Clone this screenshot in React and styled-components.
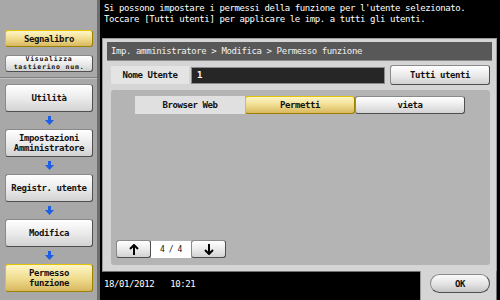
import React from "react";
import styled, { createGlobalStyle, css } from "styled-components";

const GlobalStyle = createGlobalStyle`
  html, body { margin: 0; padding: 0; background: #000; }
  body { font-family: "DejaVu Sans Mono", "Liberation Mono", monospace; }
`;

const Screen = styled.div`
  width: 500px;
  height: 300px;
  display: flex;
  background: #000;
  overflow: hidden;
  font-size: 9px;
  letter-spacing: -0.4px;
  color: #111;
`;

const Sidebar = styled.div`
  width: 97px;
  border-right: 3px solid #6e6e6e;
  background: #a8a8a8;
  display: flex;
  flex-direction: column;
`;

const SideTop = styled.div`
  height: 78px;
  box-sizing: border-box;
  padding: 30px 0 0 5px;
  display: flex;
  flex-direction: column;
  gap: 8px;
  border-bottom: 1px solid #808080;
  box-shadow: 0 1px 0 #c4c4c4;
`;

const raised = css`
  box-sizing: border-box;
  border: 1px solid #8a8a8a;
  border-right-color: #4e4e4e;
  border-bottom-color: #4e4e4e;
  border-radius: 3px;
  background: linear-gradient(#ffffff, #e9e9e9 55%, #d2d2d2);
  font-weight: bold;
  display: flex;
  align-items: center;
  justify-content: center;
  text-align: center;
`;

const selected = css`
  border: 1px solid #e6c300;
  border-right-color: #9c8100;
  border-bottom-color: #9c8100;
  background: linear-gradient(#fff6c8, #f0dd90 50%, #d8b860);
`;

const SideButton = styled.div`
  ${raised}
  width: 88px;
  height: ${(p) => p.h || 28}px;
  line-height: ${(p) => (p.small ? 7.5 : 10)}px;
  font-size: ${(p) => (p.small ? 6.5 : 9)}px;
  letter-spacing: ${(p) => (p.small ? "0.8px" : "-0.4px")};
  ${(p) => p.active && selected}
`;

const SideNav = styled.div`
  padding: 6px 0 0 5px;
  display: flex;
  flex-direction: column;
`;

const NavArrow = styled.div`
  width: 88px;
  height: 17px;
  display: flex;
  align-items: center;
  justify-content: center;
`;

const Main = styled.div`
  flex: 1;
  display: flex;
  flex-direction: column;
`;

const Message = styled.div`
  height: 38px;
  box-sizing: border-box;
  padding: 3px 0 0 4px;
  color: #fff;
  line-height: 11px;
  white-space: pre;
`;

const Panel = styled.div`
  height: 234px;
  margin: 0 3px 0 2px;
  box-sizing: border-box;
  background: #d5d5d5;
  border: 1px solid #9a9a9a;
  border-bottom-color: #707070;
  padding: 3px 4px 6px;
  display: flex;
  flex-direction: column;
`;

const Crumb = styled.div`
  height: 18px;
  background: #585858;
  color: #f2f2f2;
  padding-left: 4px;
  display: flex;
  align-items: center;
  border-bottom: 1px solid #8a8a8a;
`;

const NameRow = styled.div`
  margin: 4px 2px 0 4px;
  height: 20px;
  display: flex;
  align-items: center;
`;

const NameLabel = styled.div`
  width: 78px;
  height: 18px;
  background: #e4e4e4;
  font-weight: bold;
  display: flex;
  align-items: center;
  justify-content: center;
`;

const NameInput = styled.div`
  width: 194px;
  height: 17px;
  margin-left: 2px;
  box-sizing: border-box;
  background: #262626;
  border: 1px solid #8c8c8c;
  color: #fff;
  font-weight: bold;
  padding-left: 5px;
  display: flex;
  align-items: center;
`;

const WideButton = styled.div`
  ${raised}
  width: 100px;
  height: 20px;
  margin-left: auto;
`;

const Inner = styled.div`
  flex: 1;
  margin: 5px 2px 0 4px;
  background: #b4b4b4;
  border-radius: 3px;
  padding: 6px 5px 7px;
  display: flex;
  flex-direction: column;
`;

const Segments = styled.div`
  display: flex;
  justify-content: center;
  padding-right: 1px;
`;

const Segment = styled.div`
  ${raised}
  width: 110px;
  height: 18px;
  ${(p) => p.active && selected}
  ${(p) =>
    p.flat &&
    css`
      border: none;
      border-radius: 0;
      background: #e0e0e0;
    `}
`;

const Pager = styled.div`
  margin-top: auto;
  display: flex;
  align-items: center;
`;

const PageButton = styled.div`
  ${raised}
  width: 35px;
  height: 18px;
`;

const PageCount = styled.div`
  width: 40px;
  height: 17px;
  background: #fff;
  display: flex;
  align-items: center;
  justify-content: center;
  font-size: 8px;
`;

const BottomRow = styled.div`
  flex: 1;
  display: flex;
`;

const DateBar = styled.div`
  flex: 1;
  color: #fff;
  padding: 7px 0 0 4px;
  display: flex;
  gap: 16px;
`;

const OkTab = styled.div`
  width: 77px;
  margin-right: 3px;
  margin-top: -1px;
  background: #d5d5d5;
  border-left: 1px solid #9a9a9a;
  border-right: 1px solid #707070;
  padding: 3px 0 0 9px;
  box-sizing: border-box;
`;

const OkButton = styled.div`
  ${raised}
  width: 60px;
  height: 19px;
  border-radius: 10px;
  background: linear-gradient(#fbfbfb, #e2e2e2 55%, #c4c4c4);
`;

const BlueArrow = () => (
  <svg width="9" height="9" viewBox="0 0 9 9">
    <path d="M3 0h3v4h3L4.5 9 0 4h3z" fill="#1d5ee8" />
  </svg>
);

const Arrow = ({ up }) => (
  <svg width="10" height="11" viewBox="0 0 10 11">
    <path
      d={up ? "M5 1v10M1 5l4-4 4 4" : "M5 0v10M1 6l4 4 4-4"}
      stroke="#000"
      strokeWidth="2"
      fill="none"
    />
  </svg>
);

const steps = [
  { label: "Utilità" },
  { label: <>Impostazioni<br />Amministratore</> },
  { label: "Registr. utente" },
  { label: "Modifica" },
  { label: <>Permesso<br />funzione</>, active: true },
];

export default function App() {
  return (
    <>
      <GlobalStyle />
      <Screen>
        <Sidebar>
          <SideTop>
            <SideButton h={17} active>Segnalibro</SideButton>
            <SideButton h={17} small>
              Visualizza<br />tastierino num.
            </SideButton>
          </SideTop>
          <SideNav>
            {steps.map((s, i) => (
              <React.Fragment key={i}>
                {i > 0 && (
                  <NavArrow>
                    <BlueArrow />
                  </NavArrow>
                )}
                <SideButton active={s.active}>{s.label}</SideButton>
              </React.Fragment>
            ))}
          </SideNav>
        </Sidebar>
        <Main>
          <Message>
            {"Si possono impostare i permessi della funzione per l'utente selezionato.\nToccare [Tutti utenti] per applicare le imp. a tutti gli utenti."}
          </Message>
          <Panel>
            <Crumb>Imp. amministratore &gt; Modifica &gt; Permesso funzione</Crumb>
            <NameRow>
              <NameLabel>Nome Utente</NameLabel>
              <NameInput>1</NameInput>
              <WideButton>Tutti utenti</WideButton>
            </NameRow>
            <Inner>
              <Segments>
                <Segment flat>Browser Web</Segment>
                <Segment active>Permetti</Segment>
                <Segment>vieta</Segment>
              </Segments>
              <Pager>
                <PageButton>
                  <Arrow up />
                </PageButton>
                <PageCount>4 / 4</PageCount>
                <PageButton>
                  <Arrow />
                </PageButton>
              </Pager>
            </Inner>
          </Panel>
          <BottomRow>
            <DateBar>
              <span>18/01/2012</span>
              <span>10:21</span>
            </DateBar>
            <OkTab>
              <OkButton>OK</OkButton>
            </OkTab>
          </BottomRow>
        </Main>
      </Screen>
    </>
  );
}
